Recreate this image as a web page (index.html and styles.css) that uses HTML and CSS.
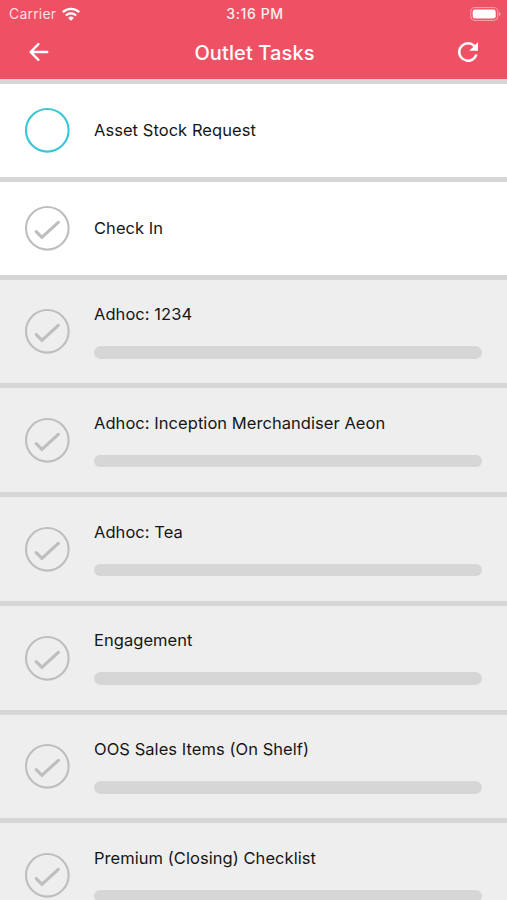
FILE: index.html
```html
<!DOCTYPE html>
<html lang="en">
<head>
<meta charset="utf-8">
<title>Outlet Tasks</title>
<link rel="stylesheet" href="styles.css">
</head>
<body>
<svg class="defs" aria-hidden="true">
  <symbol id="done" viewBox="0 0 46 46">
    <circle cx="23.3" cy="23.3" r="21.3" fill="none" stroke="#bebebe" stroke-width="2.1"/>
    <path d="M12.2 26.6 17.9 32.4 34.3 17.4" fill="none" stroke="#bebebe" stroke-width="3.2" stroke-linecap="round"/>
  </symbol>
</svg>
<header class="header">
  <div class="status">
    <div class="carrier"><span>Carrier</span>
      <svg class="wifi" viewBox="0 0 18 14"><g fill="none" stroke="#fff" stroke-width="2.3"><path d="M.8 5.2a11.8 11.8 0 0 1 16.4 0"/><path d="M3.9 8.5a7.4 7.4 0 0 1 10.2 0"/></g><path d="M9 13.8 6.1 11a4.2 4.2 0 0 1 5.8 0z" fill="#fff"/></svg>
    </div>
    <time class="clock">3:16 PM</time>
    <svg class="battery" viewBox="0 0 31 14"><rect x=".8" y=".6" width="27" height="12.8" rx="4" fill="none" stroke="#f9a5b0"/><rect x="2.7" y="2.5" width="23" height="9" rx="2.2" fill="#fff"/><path d="M29 4.8a2.4 2.4 0 0 1 0 4.4z" fill="#f9a5b0"/></svg>
  </div>
  <nav class="nav">
    <svg class="icon" viewBox="0 0 24 24"><path d="M20.3 12H4.2M11.4 4.1 3.6 12l7.8 7.9" fill="none" stroke="#fff" stroke-width="2.3" stroke-linecap="round" stroke-linejoin="round"/></svg>
    <h1 class="title">Outlet Tasks</h1>
    <svg class="refresh" viewBox="4 4 16 16"><path d="M17.65 6.35A7.96 7.96 0 0 0 12 4a8 8 0 1 0 7.73 10h-2.08A6 6 0 1 1 12 6c1.66 0 3.14.69 4.22 1.78L13 11h7V4z" fill="#fff"/></svg>
  </nav>
</header>
<main class="list">
  <section class="task open"><svg class="mark" viewBox="0 0 46 46"><circle cx="23.3" cy="23.3" r="21.3" fill="none" stroke="#38c6d9" stroke-width="2.1"/></svg><div class="body"><p>Asset Stock Request</p></div></section>
  <section class="task open"><svg class="mark"><use href="#done"/></svg><div class="body"><p>Check In</p></div></section>
  <section class="task"><svg class="mark"><use href="#done"/></svg><div class="body"><p>Adhoc: 1234</p><div class="bar"></div></div></section>
  <section class="task"><svg class="mark"><use href="#done"/></svg><div class="body"><p>Adhoc: Inception Merchandiser Aeon</p><div class="bar"></div></div></section>
  <section class="task"><svg class="mark"><use href="#done"/></svg><div class="body"><p>Adhoc: Tea</p><div class="bar"></div></div></section>
  <section class="task"><svg class="mark"><use href="#done"/></svg><div class="body"><p>Engagement</p><div class="bar"></div></div></section>
  <section class="task"><svg class="mark"><use href="#done"/></svg><div class="body"><p>OOS Sales Items (On Shelf)</p><div class="bar"></div></div></section>
  <section class="task"><svg class="mark"><use href="#done"/></svg><div class="body"><p>Premium (Closing) Checklist</p><div class="bar"></div></div></section>
</main>
</body>
</html>
```
FILE: styles.css
```css
* { box-sizing: border-box; }
body {
  margin: 0;
  height: 900px;
  overflow: hidden;
  background: #d6d6d6;
  color: #161616;
  font-family: Inter, "Liberation Sans", sans-serif;
}
svg { display: block; flex: none; }
.defs { display: none; }
.header { height: 79px; background: #ef5164; color: #fff; }
.status {
  display: grid;
  grid-template-columns: 1fr auto 1fr;
  align-items: center;
  height: 27px;
  padding: 0 6px 0 9px;
  font-size: 14px;
}
.carrier { display: flex; align-items: center; gap: 6px; color: #ffdfe3; letter-spacing: 0.2px; }
.wifi { width: 18px; height: 14px; }
.clock { font-size: 14px; font-weight: 500; letter-spacing: 0.6px; color: #ffecef; }
.battery { width: 31px; height: 14px; justify-self: end; }
.nav {
  display: flex;
  align-items: center;
  justify-content: space-between;
  height: 50px;
  padding: 0 29px 0 27px;
}
.icon { width: 24px; height: 24px; }
.refresh { width: 20px; height: 20px; }
.title { margin: 0; padding-top: 1px; font-size: 20px; font-weight: 500; line-height: 24px; letter-spacing: 0.12px; }
.list { display: flex; flex-direction: column; gap: 5px; padding-top: 5px; }
.task {
  display: flex;
  flex: none;
  align-items: center;
  gap: 24px;
  height: 103.75px;
  padding: 0 25px 0 24px;
  background: #eee;
}
.open { height: 92.75px; background: #fff; }
.mark { width: 46px; height: 46px; }
.body { flex: 1; }
.body p { margin: 0; font-size: 16.5px; line-height: 20px; letter-spacing: 0.05px; }
.bar { height: 12.5px; margin-top: 22px; border-radius: 7px; background: #d6d6d6; }
```
